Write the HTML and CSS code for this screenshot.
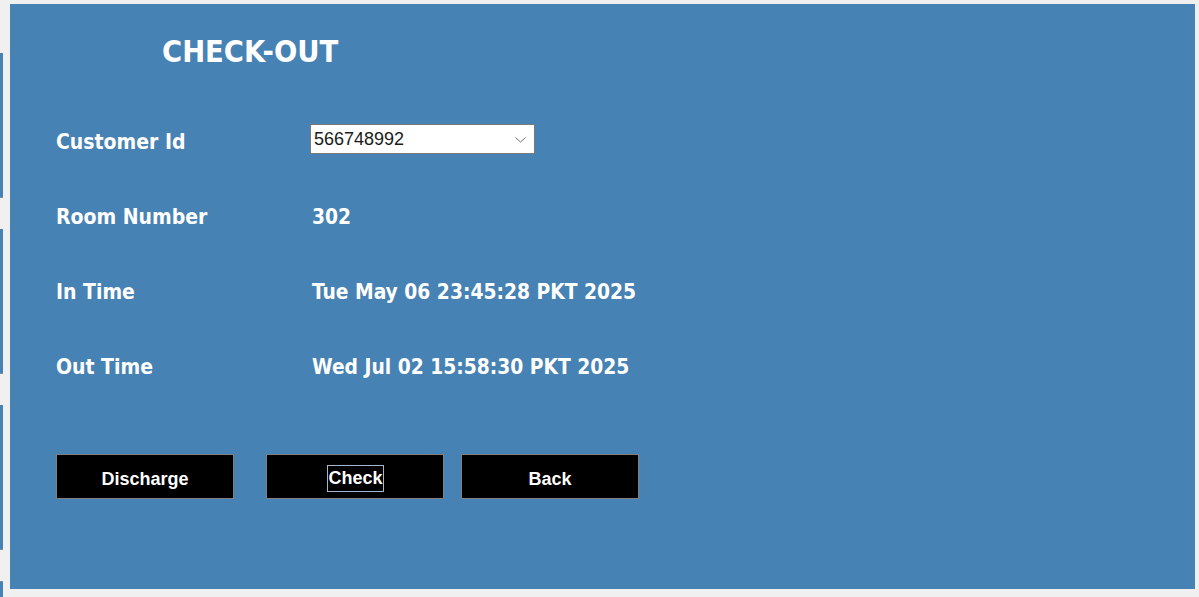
FILE: index.html
```html
<!DOCTYPE html>
<html>
<head>
<meta charset="utf-8">
<title>Check-Out</title>
<link rel="stylesheet" href="styles.css">
</head>
<body>
<div class="window">
  <div class="strip">
    <div class="seg"></div>
    <div class="seg"></div>
    <div class="seg"></div>
    <div class="seg last"></div>
  </div>
  <main class="panel">
    <h1 class="title">CHECK-OUT</h1>
    <div class="form">
      <div class="label">Customer Id</div>
      <div class="combo">
        <span class="combo-text">566748992</span>
        <svg class="chev" width="11" height="6" viewBox="0 0 11 6"><path d="M0.5 0.5 L5.5 5 L10.5 0.5" fill="none" stroke="#6e6e6e" stroke-width="1"/></svg>
      </div>
      <div class="label">Room Number</div>
      <div class="value">302</div>
      <div class="label">In Time</div>
      <div class="value">Tue May 06 23:45:28 PKT 2025</div>
      <div class="label">Out Time</div>
      <div class="value">Wed Jul 02 15:58:30 PKT 2025</div>
    </div>
    <div class="buttons">
      <button class="btn">Discharge</button>
      <button class="btn btn-check"><span class="focus">Check</span></button>
      <button class="btn btn-back">Back</button>
    </div>
  </main>
</div>
</body>
</html>
```
FILE: styles.css
```css
html, body {
  margin: 0;
  padding: 0;
  background: #f0f0f0;
  overflow: hidden;
}
.window {
  display: flex;
  width: 1199px;
  height: 597px;
}
.strip {
  width: 3px;
  display: flex;
  flex-direction: column;
  gap: 31px;
  padding-top: 53px;
}
.seg {
  height: 145px;
  background: #4682b4;
  border-bottom: 1px solid #7d8a96;
  box-sizing: border-box;
}
.seg.last {
  flex: 1;
  border-bottom: 0;
  border-top: 1px solid #7d8a96;
}
.panel {
  margin: 4px 0 8px 7px;
  width: 1185px;
  height: 585px;
  background: #4682b4;
  box-sizing: border-box;
  padding: 29px 0 0 46px;
  color: #ffffff;
  font-family: "DejaVu Sans Condensed", "DejaVu Sans", sans-serif;
  font-stretch: condensed;
}
.title {
  margin: 0 0 0 106px;
  font-size: 30.5px;
  line-height: 38px;
  font-weight: bold;
  height: 38px;
}
.form {
  margin-top: 53px;
  display: grid;
  grid-template-columns: 254px 1fr;
  grid-auto-rows: 30px;
  row-gap: 45px;
  align-items: center;
  justify-items: start;
}
.label, .value {
  font-size: 21px;
  font-weight: bold;
  line-height: 30px;
  padding-top: 5px;
  white-space: nowrap;
}
.value {
  padding-left: 2px;
  font-size: 20.8px;
}
.combo {
  width: 225px;
  height: 30px;
  box-sizing: border-box;
  border: 1px solid #7a7a7a;
  background: #ffffff;
  display: flex;
  align-items: center;
  justify-content: space-between;
  padding: 0 8px 0 3px;
}
.combo-text {
  font-family: "Liberation Sans", Arial, sans-serif;
  font-stretch: normal;
  font-size: 18px;
  color: #1a1a1a;
}
.chev {
  display: block;
  margin-top: 1px;
}
.buttons {
  margin-top: 75px;
  display: flex;
}
.btn {
  width: 178px;
  height: 45px;
  background: #000000;
  border: 1px solid #808080;
  color: #ffffff;
  font-family: "Liberation Sans", Arial, sans-serif;
  font-size: 18px;
  font-weight: bold;
  padding: 5px 0 0 0;
  margin: 0;
  display: flex;
  align-items: center;
  justify-content: center;
}
.btn-check {
  margin-left: 32px;
}
.btn-back {
  margin-left: 17px;
}
.focus {
  display: inline-block;
  border: 1px solid #a3b8cc;
  line-height: 25px;
  padding: 0 0 0 1px;
  width: 57px;
  text-align: left;
  box-sizing: border-box;
  margin-top: -2px;
}
```
